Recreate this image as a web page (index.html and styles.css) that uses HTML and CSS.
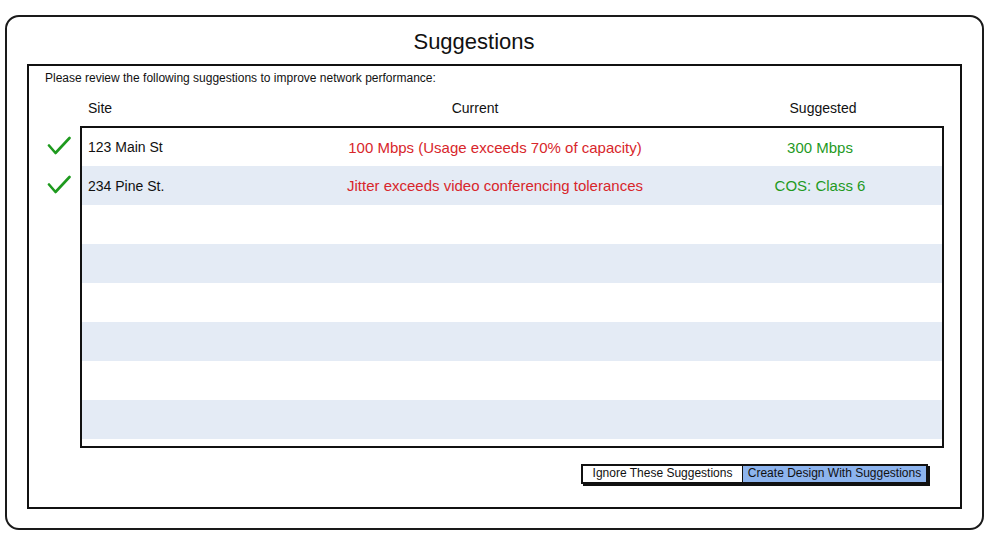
FILE: index.html
```html
<!DOCTYPE html>
<html>
<head>
<meta charset="utf-8">
<link rel="stylesheet" href="styles.css">
</head>
<body>
<div class="window">
  <div class="title">Suggestions</div>
  <div class="panel">
    <div class="intro">Please review the following suggestions to improve network performance:</div>
    <div class="head">
      <div class="h-site">Site</div>
      <div class="h-cur">Current</div>
      <div class="h-sug">Suggested</div>
    </div>
    <div class="tablewrap">
      <div class="checks">
        <div class="check first"><svg width="24" height="20" viewBox="0 0 24 20"><path d="M2 9.5 L8.5 17 L22.5 2" fill="none" stroke="#1e9a1e" stroke-width="2.6" stroke-linecap="round" stroke-linejoin="round"/></svg></div>
        <div class="check"><svg width="24" height="20" viewBox="0 0 24 20"><path d="M2 9.5 L8.5 17 L22.5 2" fill="none" stroke="#1e9a1e" stroke-width="2.6" stroke-linecap="round" stroke-linejoin="round"/></svg></div>
      </div>
      <div class="table">
        <div class="row first">
          <div class="c-site">123 Main St</div>
          <div class="c-cur">100 Mbps (Usage exceeds 70% of capacity)</div>
          <div class="c-sug">300 Mbps</div>
        </div>
        <div class="row alt">
          <div class="c-site">234 Pine St.</div>
          <div class="c-cur">Jitter exceeds video conferencing tolerances</div>
          <div class="c-sug">COS: Class 6</div>
        </div>
        <div class="row"></div>
        <div class="row alt"></div>
        <div class="row"></div>
        <div class="row alt"></div>
        <div class="row"></div>
        <div class="row alt"></div>
      </div>
    </div>
    <div class="actions">
      <div class="btngroup">
        <div class="btn">Ignore These Suggestions</div>
        <div class="btn primary">Create Design With Suggestions</div>
      </div>
    </div>
  </div>
</div>
</body>
</html>
```
FILE: styles.css
```css
* { box-sizing: border-box; }
html, body { margin: 0; padding: 0; background: #fff; }
body {
  font-family: "Liberation Sans", Arial, sans-serif;
  color: #111;
  width: 989px;
  height: 537px;
  overflow: hidden;
}
.window {
  margin: 15px 0 0 5px;
  width: 979px;
  height: 515px;
  border: 2px solid #1a1a1a;
  border-radius: 14px;
  padding: 0 20px;
}
.title {
  height: 47px;
  padding-top: 12px;
  padding-right: 41px;
  font-size: 22px;
  line-height: 25px;
  text-align: center;
}
.panel {
  height: 445px;
  border: 2px solid #111;
  display: flex;
  flex-direction: column;
}
.intro {
  font-size: 12px;
  line-height: 14px;
  padding: 5px 0 0 16px;
}
.head {
  margin-top: 14px;
  margin-left: 53px;
  display: grid;
  grid-template-columns: 166px 454px 242px;
  font-size: 14px;
  line-height: 18px;
}
.h-site { padding-left: 6px; }
.h-cur, .h-sug { text-align: center; }
.tablewrap {
  margin-top: 9px;
  display: flex;
}
.checks {
  width: 51px;
  padding-left: 18px;
  padding-top: 10px;
}
.check { height: 39px; }
.check svg { display: block; }
.table {
  width: 864px;
  height: 322px;
  border: 2px solid #111;
}
.row {
  height: 39px;
  display: grid;
  grid-template-columns: 166px 494px 156px 1fr;
  align-items: center;
  font-size: 15px;
}
.row.first { height: 38px; }
.row.alt { background: #e4ebf5; }
.c-site { padding-left: 6px; color: #111; font-size: 14px; }
.c-cur { text-align: center; color: #d8262b; white-space: nowrap; }
.c-sug { text-align: center; color: #1f9a1f; white-space: nowrap; }
.actions {
  margin-top: 16px;
  display: flex;
  justify-content: flex-end;
  padding-right: 32px;
}
.btngroup {
  display: flex;
  border: 2px solid #111;
  box-shadow: 2px 2px 0 #111;
}
.btn {
  height: 16px;
  font-size: 12px;
  line-height: 15px;
  background: #fff;
  text-align: center;
  white-space: nowrap;
}
.btn:first-child { width: 160px; border-right: 1px solid #111; }
.btn.primary { width: 183px; background: #8db4ee; }
```
